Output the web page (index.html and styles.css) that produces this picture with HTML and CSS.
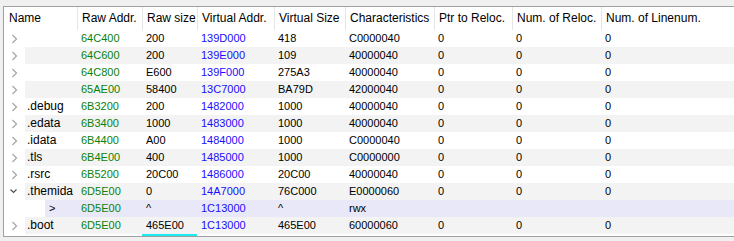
FILE: index.html
```html
<!DOCTYPE html>
<html>
<head>
<meta charset="utf-8">
<link rel="stylesheet" href="styles.css">
</head>
<body>
<div class="top"></div>
<div class="table">
  <div class="head">
    <div class="c">Name</div>
    <div class="c">Raw Addr.</div>
    <div class="c">Raw size</div>
    <div class="c">Virtual Addr.</div>
    <div class="c">Virtual Size</div>
    <div class="c">Characteristics</div>
    <div class="c">Ptr to Reloc.</div>
    <div class="c">Num. of Reloc.</div>
    <div class="c">Num. of Linenum.</div>
  </div>

  <div class="row">
    <div class="gut"><svg class="chev" width="21" height="17"><polyline points="8.5,5 12.5,9 8.5,13"/></svg></div>
    <div class="line"><div class="c nm"></div><div class="c g">64C400</div><div class="c">200</div><div class="c b">139D000</div><div class="c">418</div><div class="c">C0000040</div><div class="c">0</div><div class="c">0</div><div class="c">0</div></div>
  </div>
  <div class="row alt">
    <div class="gut"><svg class="chev" width="21" height="17"><polyline points="8.5,5 12.5,9 8.5,13"/></svg></div>
    <div class="line"><div class="c nm"></div><div class="c g">64C600</div><div class="c">200</div><div class="c b">139E000</div><div class="c">109</div><div class="c">40000040</div><div class="c">0</div><div class="c">0</div><div class="c">0</div></div>
  </div>
  <div class="row">
    <div class="gut"><svg class="chev" width="21" height="17"><polyline points="8.5,5 12.5,9 8.5,13"/></svg></div>
    <div class="line"><div class="c nm"></div><div class="c g">64C800</div><div class="c">E600</div><div class="c b">139F000</div><div class="c">275A3</div><div class="c">40000040</div><div class="c">0</div><div class="c">0</div><div class="c">0</div></div>
  </div>
  <div class="row alt">
    <div class="gut"><svg class="chev" width="21" height="17"><polyline points="8.5,5 12.5,9 8.5,13"/></svg></div>
    <div class="line"><div class="c nm"></div><div class="c g">65AE00</div><div class="c">58400</div><div class="c b">13C7000</div><div class="c">BA79D</div><div class="c">42000040</div><div class="c">0</div><div class="c">0</div><div class="c">0</div></div>
  </div>
  <div class="row">
    <div class="gut"><svg class="chev" width="21" height="17"><polyline points="8.5,5 12.5,9 8.5,13"/></svg></div>
    <div class="line"><div class="c nm">.debug</div><div class="c g">6B3200</div><div class="c">200</div><div class="c b">1482000</div><div class="c">1000</div><div class="c">40000040</div><div class="c">0</div><div class="c">0</div><div class="c">0</div></div>
  </div>
  <div class="row alt">
    <div class="gut"><svg class="chev" width="21" height="17"><polyline points="8.5,5 12.5,9 8.5,13"/></svg></div>
    <div class="line"><div class="c nm">.edata</div><div class="c g">6B3400</div><div class="c">1000</div><div class="c b">1483000</div><div class="c">1000</div><div class="c">40000040</div><div class="c">0</div><div class="c">0</div><div class="c">0</div></div>
  </div>
  <div class="row">
    <div class="gut"><svg class="chev" width="21" height="17"><polyline points="8.5,5 12.5,9 8.5,13"/></svg></div>
    <div class="line"><div class="c nm">.idata</div><div class="c g">6B4400</div><div class="c">A00</div><div class="c b">1484000</div><div class="c">1000</div><div class="c">C0000040</div><div class="c">0</div><div class="c">0</div><div class="c">0</div></div>
  </div>
  <div class="row alt">
    <div class="gut"><svg class="chev" width="21" height="17"><polyline points="8.5,5 12.5,9 8.5,13"/></svg></div>
    <div class="line"><div class="c nm">.tls</div><div class="c g">6B4E00</div><div class="c">400</div><div class="c b">1485000</div><div class="c">1000</div><div class="c">C0000000</div><div class="c">0</div><div class="c">0</div><div class="c">0</div></div>
  </div>
  <div class="row">
    <div class="gut"><svg class="chev" width="21" height="17"><polyline points="8.5,5 12.5,9 8.5,13"/></svg></div>
    <div class="line"><div class="c nm">.rsrc</div><div class="c g">6B5200</div><div class="c">20C00</div><div class="c b">1486000</div><div class="c">20C00</div><div class="c">40000040</div><div class="c">0</div><div class="c">0</div><div class="c">0</div></div>
  </div>
  <div class="row alt">
    <div class="gut"><svg class="chev down" width="21" height="17"><polyline points="6.5,6.5 9.5,9.5 12.5,6.5"/></svg></div>
    <div class="line"><div class="c nm">.themida</div><div class="c g">6D5E00</div><div class="c">0</div><div class="c b">14A7000</div><div class="c">76C000</div><div class="c">E0000060</div><div class="c">0</div><div class="c">0</div><div class="c">0</div></div>
  </div>
  <div class="row child sel">
    <div class="gut"></div>
    <div class="line"><div class="c nm">&gt;</div><div class="c g">6D5E00</div><div class="c">^</div><div class="c b">1C13000</div><div class="c">^</div><div class="c">rwx</div><div class="c"></div><div class="c"></div><div class="c"></div></div>
  </div>
  <div class="row alt">
    <div class="gut"><svg class="chev" width="21" height="17"><polyline points="8.5,5 12.5,9 8.5,13"/></svg></div>
    <div class="line"><div class="c nm">.boot</div><div class="c g">6D5E00</div><div class="c focus">465E00</div><div class="c b">1C13000</div><div class="c">465E00</div><div class="c">60000060</div><div class="c">0</div><div class="c">0</div><div class="c">0</div></div>
  </div>
</div>
</body>
</html>
```
FILE: styles.css
```css
html, body {
  margin: 0;
  padding: 0;
}
body {
  background: #f0f0f0;
  font-family: "Liberation Sans", Arial, sans-serif;
  color: #000;
  height: 241px;
  overflow: hidden;
}
.top {
  height: 6px;
}
.table {
  margin-left: 3px;
  background: #fff;
  border-top: 1px solid #a0a0a0;
  border-left: 1px solid #a0a0a0;
  border-bottom: 1px solid #a0a0a0;
  padding-bottom: 2px;
}
.head {
  display: grid;
  grid-template-columns: 73px 65px 55px 77px 71px 89px 78px 89px 1fr;
  height: 23px;
  font-size: 12px;
  line-height: 23px;
}
.head .c {
  padding-left: 5px;
  white-space: nowrap;
  overflow: hidden;
}
.head .c + .c {
  border-left: 1px solid #e5e5e5;
  padding-left: 4px;
}
.row {
  display: flex;
  height: 17px;
  line-height: 17px;
}
.gut {
  width: 21px;
  flex: none;
  background: #fff;
}
.chev {
  display: block;
}
.chev polyline {
  fill: none;
  stroke: #a8a8a8;
  stroke-width: 1.3;
}
.chev.down polyline {
  stroke: #505050;
  stroke-width: 1.2;
}
.line {
  flex: 1;
  display: grid;
  grid-template-columns: 52px 65px 55px 77px 71px 89px 78px 89px 1fr;
  font-size: 11px;
}
.row.alt .line {
  background: #f3f3f3;
}
.row.sel .line {
  background: #e8e8f8;
}
.row.child .gut {
  width: 41px;
}
.row.child .line {
  grid-template-columns: 32px 65px 55px 77px 71px 89px 78px 89px 1fr;
}
.line .c {
  padding-left: 4px;
  white-space: nowrap;
  overflow: hidden;
}
.line .nm {
  padding-left: 2px;
  font-size: 12px;
}
.row.child .nm {
  padding-left: 4px;
  font-size: 11px;
}
.g {
  color: #0a820a;
}
.b {
  color: #1a0dff;
}
.focus {
  position: relative;
  overflow: visible !important;
}
.focus::after {
  content: "";
  position: absolute;
  left: 0;
  right: 0;
  bottom: -2px;
  height: 2px;
  background: #1ee8f0;
}
```
